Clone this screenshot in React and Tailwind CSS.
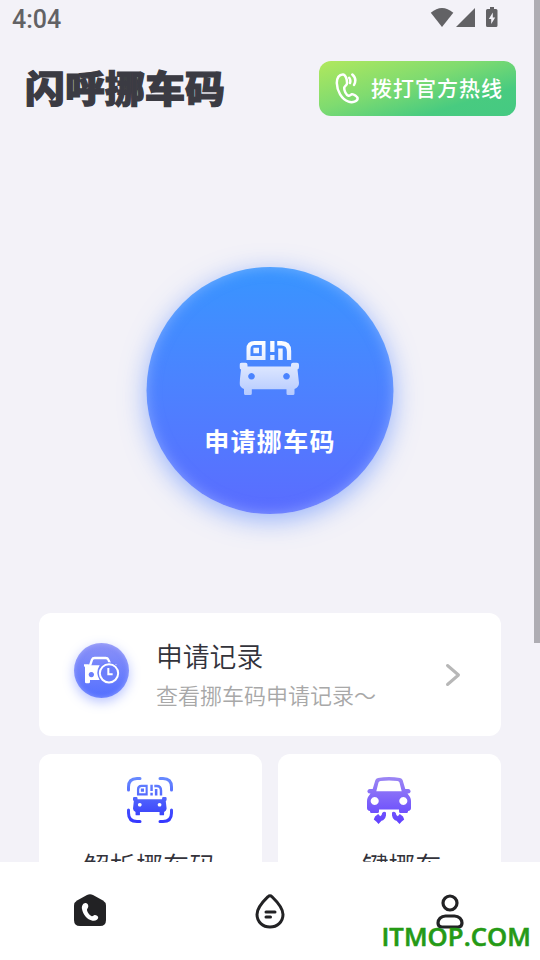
import classNames from "clsx";

const StatusBar = () => (
  <div className="flex h-9 items-start justify-between pl-3 pr-[42px] text-[#626265]">
    <div className="pt-1 font-['Roboto','Noto_Sans',sans-serif] text-[25px] font-medium leading-8">
      4:04
    </div>
    <svg width="68" height="22" viewBox="0 0 68 22" fill="currentColor" className="mt-1.5">
      <path d="M0.8 6.8Q12 -3 23.3 6.8L12 21Z" />
      <path d="M45 2V21H26Z" />
      <path d="M60 1h4v2h2q1.500 0 1.500 1.500V19.500q0 1.500 -1.500 1.500H57.500q-1.500 0 -1.500 -1.500V4.500Q56 3 57.500 3H60Z" />
      <path d="M62.800 6.500L58.800 13h2.400v5L65.200 11.500h-2.400Z" fill="#f3f2f8" />
    </svg>
  </div>
);

const Car = () => (
  <>
    <path
      fillRule="evenodd"
      d="M15 0H26V19H7V8Q7 0 15 0ZM15 4Q11 4 11 8.500V15H22.300V4ZM13.900 6.700H19.500V12.200H13.900Z"
    />
    <path d="M30.700 0H35V11H30.700ZM30.700 14H35V19H30.700ZM38.700 7.500H43.200V19H38.700Z" />
    <path d="M37.700 0H42Q51.700 0 51.700 10V19H47.400V10.500Q47.400 4.500 42 4.500H37.700Z" />
    <path
      fillRule="evenodd"
      d="M2 21.700H6Q8 21.700 8 23.700V25.500H51.500V23.700Q51.500 21.700 53.500 21.700H57.500Q59.500 21.700 59.500 23.700V26Q59.500 28 58 28.500L59.500 42Q59.500 46 55 48V52.500Q55 54 53.500 54H48.500Q47 54 47 52.500V48.300H12.300V52.500Q12.300 54 10.800 54H6Q4.500 54 4.500 52.500V48Q0 46 0 42L1.500 28.500Q0 28 0 26V23.700Q0 21.700 2 21.700ZM12 32a3.300 3.300 0 1 0 .01 0ZM47 32a3.300 3.300 0 1 0 .01 0Z"
    />
  </>
);

const CallIcon = () => (
  <svg
    width="24"
    height="31"
    viewBox="0 0 24 31"
    fill="none"
    stroke="white"
    strokeWidth="2.500"
    strokeLinecap="round"
    strokeLinejoin="round"
  >
    <path d="M8 1.400C4 1.300 1.800 5 1.800 10C2 18 6.500 26 13.500 28.600C17.500 30 22.600 28.300 22.600 25.500C22.600 23.500 18.500 20.800 16.800 21.200C15.400 21.500 14.800 23.300 13.500 22.800C11 22 9 17.500 9.200 14.700C9.300 13 12 12.500 12.100 10C12.200 6.500 10.500 1.500 8 1.400Z" />
    <path d="M14.200 4.800Q16 7.300 15 10M17.300 1.500Q22.300 5.800 19 12" />
  </svg>
);

const Header = () => (
  <header className="flex items-center justify-between pl-[25px] pr-6 pt-[25px]">
    <h1 className="-mt-0.5 scale-y-[0.93] whitespace-nowrap text-[40px] font-black leading-[55px] text-[#3b3b43] [-webkit-text-stroke:1.300px_#3b3b43]">
      闪呼挪车码
    </h1>
    <button className="flex h-[55px] w-[197px] items-center gap-3 rounded-xl bg-[linear-gradient(163deg,#b1e85d_0%,#7fdb70_42%,#48cb80_75%,#45c982_100%)] pl-4 text-white">
      <CallIcon />
      <span className="-mt-0.5 whitespace-nowrap text-[21px] font-medium tracking-[1px]">
        拨打官方热线
      </span>
    </button>
  </header>
);

const ApplyButton = () => (
  <button className="mx-auto mt-[151px] flex size-[247px] shrink-0 -translate-x-[0.5px] flex-col items-center rounded-full bg-linear-to-b from-[#3795ff] to-[#5a6cff] pt-[74px] text-white shadow-[0_6px_26px_rgba(72,126,255,0.55),inset_0_0_14px_rgba(180,205,255,0.5)]">
    <svg width="60" height="54" viewBox="0 0 60 54" fill="url(#car-white)">
      <defs>
        <linearGradient id="car-white" gradientUnits="userSpaceOnUse" x1="0" y1="0" x2="0" y2="54">
          <stop offset="0" stopColor="#fff" />
          <stop offset="1" stopColor="#b5caff" />
        </linearGradient>
      </defs>
      <Car />
    </svg>
    <span className="mt-[25px] pl-[1px] text-[25px] font-bold leading-10 tracking-[1.3px]">
      申请挪车码
    </span>
  </button>
);

const RecordIcon = () => (
  <div className="size-[55px] rounded-full bg-linear-to-b from-[#8c91f7] to-[#536fff] shadow-[0_4px_12px_rgba(83,111,255,0.4),inset_0_0_5px_rgba(200,205,255,0.5)]">
    <svg width="55" height="55" viewBox="42 39 165 165" fill="none">
      <path d="M90 107L96 89Q98 84 104 84H137Q143 84 145 89L151 103" stroke="white" strokeWidth="7" />
      <path
        d="M72 103H85L91 106H119Q105 128 119 150H90V156Q90 160 86 160H79Q75 160 75 156V112L72 108ZM94 126a8 8 0 1 0 .1 0Z"
        fill="white"
        fillRule="evenodd"
      />
      <path d="M157 102H169V107H163Z" fill="white" />
      <circle cx="147" cy="130" r="33" fill="#6b7efb" />
      <circle cx="147" cy="130" r="27.500" stroke="white" strokeWidth="6" />
      <path d="M145 114V133H158" stroke="white" strokeWidth="6" />
    </svg>
  </div>
);

const ScanIcon = () => (
  <svg width="46" height="46" viewBox="0 0 46 46">
    <defs>
      <linearGradient id="scan-blue" gradientUnits="userSpaceOnUse" x1="0" y1="0" x2="0" y2="46">
        <stop offset="0" stopColor="#688bff" />
        <stop offset="1" stopColor="#3436ff" />
      </linearGradient>
      <linearGradient id="car-blue" gradientUnits="userSpaceOnUse" x1="0" y1="0" x2="0" y2="54">
        <stop offset="0" stopColor="#607dff" />
        <stop offset="1" stopColor="#3b43fa" />
      </linearGradient>
    </defs>
    <path
      d="M1.500 13V10Q1.500 1.500 10 1.500H13M33 1.500H36Q44.500 1.500 44.500 10V13M44.500 33V36Q44.500 44.500 36 44.500H33M13 44.500H10Q1.500 44.500 1.500 36V33"
      fill="none"
      stroke="url(#scan-blue)"
      strokeWidth="3"
      strokeLinecap="round"
    />
    <g transform="translate(6 7.800) scale(0.565)" fill="url(#car-blue)">
      <Car />
    </g>
  </svg>
);

const MoveCarIcon = () => (
  <svg width="44" height="47" viewBox="0 0 44 47" fill="url(#car-purple)">
    <defs>
      <linearGradient id="car-purple" gradientUnits="userSpaceOnUse" x1="0" y1="0" x2="0" y2="47">
        <stop offset="0" stopColor="#9c86f4" />
        <stop offset="1" stopColor="#6040ff" />
      </linearGradient>
    </defs>
    <path
      fillRule="evenodd"
      d="M11 1Q22 -1 33 1Q35 1.400 35.600 3L38.300 12H41.500Q44 12.500 43.500 15Q43 16.500 40.500 16.500L43 20Q44 22 44 24V31Q44 33.500 41 34V34.500Q41 36 39.500 36H33.500Q32 36 32 34.500V32.500H12V34.500Q12 36 10.500 36H4.500Q3 36 3 34.500V34Q0 33.500 0 31V24Q0 22 1 20L3.500 16.500Q1 16.500 0.500 15Q0 12.500 2.500 12H5.700L8.400 3Q9 1.400 11 1ZM13.500 4Q12 4.200 11.500 5.500L9.300 14.200H34.700L32.500 5.500Q32 4.200 30.500 4Q22 3 13.500 4ZM7.700 20a4 4 0 1 0 .01 0ZM36.300 20a4 4 0 1 0 .01 0Z"
    />
    <path d="M15.200 36Q17 34 19 35.500V38.500Q18 43 14.500 43.800L11.500 47L9.500 44.700L6.800 42.500L8 39.500L11.200 37L13.200 39.200Q15 38.500 15.200 36Z" />
    <path d="M28.800 36Q27 34 25 35.500V38.500Q26 43 29.500 43.800L32.500 47L34.500 44.700L37.200 42.500L36 39.500L32.800 37L30.800 39.200Q29 38.500 28.800 36Z" />
  </svg>
);

const FeatureCard = ({ icon, label }) => (
  <div className="flex h-[150px] flex-1 flex-col items-center rounded-xl bg-white pr-[2px] pt-[23px]">
    <div className="h-12">{icon}</div>
    <div className="mt-5 whitespace-nowrap text-[26.600px] font-[350] leading-10 text-[#33333b]">
      {label}
    </div>
  </div>
);

const navIcons = [
  {
    name: "home",
    icon: (
      <svg width="32" height="32" viewBox="0 0 32 32">
        <path
          d="M13 1Q16 -0.500 19 1L29 6.500Q32 8.300 32 11.500V26Q32 32 26 32H6Q0 32 0 26V11.500Q0 8.300 3 6.500Z"
          fill="#222224"
        />
        <path
          d="M12.500 9.200C9.800 8 7.300 11.500 8 15C9 20.500 13 25.500 18.500 26.700C21.500 27.300 24.200 25.700 24.200 23.500C24.200 22 22 20.700 20.700 20.900C19.300 21.200 18.800 22.700 17.400 22C15.200 20.800 13.500 18.500 13 16.200C12.700 14.800 14.200 14.200 14.300 12.500C14.400 11 13.700 9.700 12.500 9.200Z"
          fill="white"
        />
      </svg>
    ),
  },
  {
    name: "message",
    icon: (
      <svg
        width="30"
        height="35"
        viewBox="0 0 30 35"
        fill="none"
        stroke="#222224"
        strokeWidth="3"
        strokeLinecap="round"
      >
        <path d="M13 2.700Q15 0.700 17 2.700C22 7.500 28 14 28 20.500C28 28 22 33 15 33S2 28 2 20.500C2 14 8 7.500 13 2.700Z" />
        <path d="M11 18H20M11 23H15.500" />
      </svg>
    ),
  },
  {
    name: "mine",
    icon: (
      <svg width="28" height="35" viewBox="0 0 28 35" fill="none" stroke="#222224" strokeWidth="3.200">
        <circle cx="14" cy="9" r="7" />
        <path d="M9.500 22H18.500C23 22 26 25.500 26 29Q26 33 22 33H6Q2 33 2 29C2 25.500 5 22 9.500 22Z" />
      </svg>
    ),
  },
];

const TabBar = () => (
  <nav className="relative flex h-[98px] shrink-0 bg-white">
    {navIcons.map(({ name, icon }) => (
      <div
        key={name}
        className={classNames("flex h-[98px] flex-1 items-center justify-center", {
          "pb-0": name !== "home",
          "pb-[2px]": name === "home",
        })}
      >
        {icon}
      </div>
    ))}
    <div className="absolute right-[9px] top-[59px] font-['Open_Sans','Noto_Sans',sans-serif] text-[25.600px] font-semibold leading-8 tracking-[0.100px] text-[#259a15] [-webkit-text-stroke:0.600px_#259a15]">
      ITMOP.COM
    </div>
  </nav>
);

export default function App() {
  return (
    <div className="relative flex h-[960px] w-[540px] flex-col overflow-hidden bg-[#f3f2f8] font-['Noto_Sans_CJK_SC',sans-serif]">
      <main className="flex min-h-0 flex-1 flex-col overflow-hidden">
        <StatusBar />
        <Header />
        <ApplyButton />
        <section className="mt-[99px] flex flex-col gap-[18px] px-[39px]">
          <div className="flex h-[123px] items-center rounded-xl bg-white pl-[35px] pr-10">
            <div className="-mt-2">
              <RecordIcon />
            </div>
            <div className="ml-[27px] flex-1 whitespace-nowrap font-[350]">
              <div className="pt-px text-[26.800px] leading-10 text-[#33333b]">申请记录</div>
              <div className="-mt-0.5 text-[22px] leading-10 text-[#a8a8a8]">
                查看挪车码申请记录～
              </div>
            </div>
            <svg
              width="16"
              height="24"
              viewBox="0 0 16 24"
              fill="none"
              stroke="#b7b7b7"
              strokeWidth="3"
              strokeLinecap="round"
              strokeLinejoin="round"
            >
              <path d="M2.500 2.500L13.500 12L2.500 21.500" />
            </svg>
          </div>
          <div className="flex gap-4">
            <FeatureCard icon={<ScanIcon />} label="解析挪车码" />
            <FeatureCard icon={<MoveCarIcon />} label="一键挪车" />
          </div>
        </section>
      </main>
      <TabBar />
      <div className="absolute right-0 top-0 h-[643px] w-1.5 bg-[#aeadb3]" />
    </div>
  );
}
